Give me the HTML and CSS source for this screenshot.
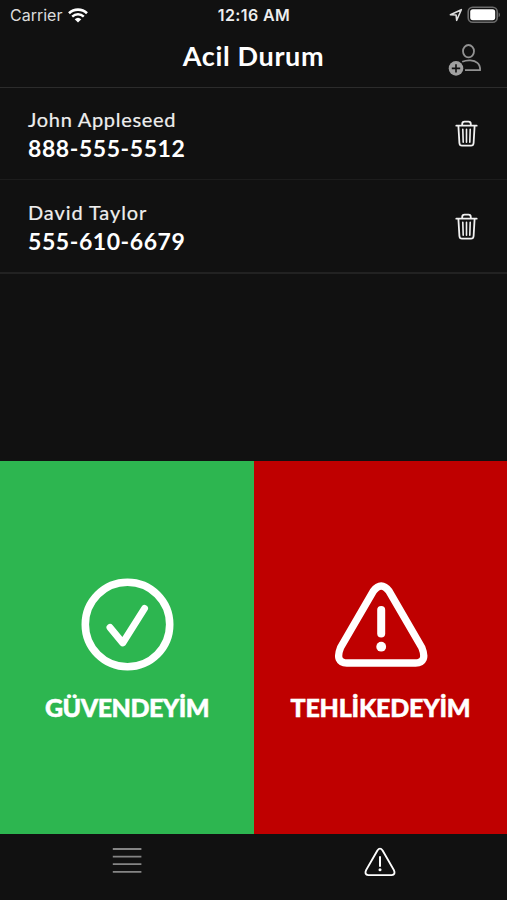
FILE: index.html
```html
<!DOCTYPE html>
<html lang="tr">
<head>
  <meta charset="UTF-8">
  <meta name="viewport" content="width=device-width, initial-scale=1.0">
  <title>Acil Durum</title>
  <link rel="stylesheet" href="styles.css">
</head>
<body>

<div class="app">
  <!-- Status bar -->
  <div class="status-bar">
    <div class="status-left">
      <span class="carrier">Carrier</span>
      <svg class="wifi" width="20" height="15" viewBox="0 0 20 15">
        <path d="M1 5.2a13 13 0 0 1 18 0" fill="none" stroke="#fff" stroke-width="2.6"/>
        <path d="M4.2 8.6a8.3 8.3 0 0 1 11.6 0" fill="none" stroke="#fff" stroke-width="2.4"/>
        <path d="M6.7 11.2a4.8 4.8 0 0 1 6.6 0L10 14.6z" fill="#fff"/>
      </svg>
    </div>
    <span class="clock">12:16 AM</span>
    <div class="status-right">
      <svg width="14" height="14" viewBox="0 0 14 14">
        <path d="M1.4 6.7L12.3 1.7 7.7 12.3 7.1 7z" fill="none" stroke="#ddd" stroke-width="1.6" stroke-linejoin="round"/>
      </svg>
      <svg width="34" height="18" viewBox="0 0 34 18">
        <rect x="1.2" y="1.2" width="29" height="15" rx="4.5" fill="none" stroke="#6c6c6c" stroke-width="1.6"/>
        <rect x="3.2" y="3.2" width="25" height="11" rx="2.6" fill="#fff"/>
        <path d="M31.6 6.4c1.8.7 1.8 4 0 4.7z" fill="#6c6c6c"/>
      </svg>
    </div>
  </div>

  <!-- Header -->
  <div class="header">
    <h1>Acil Durum</h1>
    <button class="add-button" aria-label="Kişi ekle">
      <svg width="34" height="34" viewBox="0 0 34 34">
        <ellipse cx="20.5" cy="8.2" rx="5.5" ry="6.2" fill="none" stroke="#929292" stroke-width="1.8"/>
        <path d="M14.2 18.8c5-2.3 11.8-2 15.2 1.1 2 1.7 2.8 4 2.7 7.2H17" fill="none" stroke="#929292" stroke-width="1.8" stroke-linejoin="round"/>
        <circle cx="8" cy="25.4" r="7.3" fill="#a0a0a0"/>
        <path d="M8 21.2v8.4M3.8 25.4h8.4" stroke="#111" stroke-width="1.6"/>
      </svg>
    </button>
  </div>

  <!-- Contacts -->
  <div class="contacts">
    <div class="contact">
      <div>
        <div class="name name-john">John Appleseed</div>
        <div class="phone">888-555-5512</div>
      </div>
      <button class="delete-button" aria-label="Sil">
        <svg width="23" height="27" viewBox="0 0 23 27">
          <g fill="none" stroke="#f2f2f2" stroke-linecap="round" stroke-linejoin="round">
            <path d="M1.3 5.7h20.4M7.2 5.4V4q0-2.4 2.3-2.4h4Q15.8 1.6 15.8 4v1.4M3.4 6l1 17q.2 2.7 2.6 2.7h9q2.4 0 2.6-2.7l1-17" stroke-width="1.8"/>
            <path d="M7.8 9.2l.4 13M11.5 9.2v13M15.2 9.2l-.4 13" stroke-width="1.6"/>
          </g>
        </svg>
      </button>
    </div>
    <div class="contact">
      <div>
        <div class="name name-david">David Taylor</div>
        <div class="phone">555-610-6679</div>
      </div>
      <button class="delete-button" aria-label="Sil">
        <svg width="23" height="27" viewBox="0 0 23 27">
          <g fill="none" stroke="#f2f2f2" stroke-linecap="round" stroke-linejoin="round">
            <path d="M1.3 5.7h20.4M7.2 5.4V4q0-2.4 2.3-2.4h4Q15.8 1.6 15.8 4v1.4M3.4 6l1 17q.2 2.7 2.6 2.7h9q2.4 0 2.6-2.7l1-17" stroke-width="1.8"/>
            <path d="M7.8 9.2l.4 13M11.5 9.2v13M15.2 9.2l-.4 13" stroke-width="1.6"/>
          </g>
        </svg>
      </button>
    </div>
  </div>

  <!-- Safe / danger buttons -->
  <div class="actions">
    <button class="action safe">
      <svg width="94" height="94" viewBox="0 0 94 94">
        <circle cx="47.5" cy="46.5" r="42.2" fill="none" stroke="#fff" stroke-width="7.6"/>
        <path d="M30 49.5l12.8 15.4L64.5 30.5" fill="none" stroke="#fff" stroke-width="7" stroke-linecap="round" stroke-linejoin="round"/>
      </svg>
      <span class="safe-label">GÜVENDEYİM</span>
    </button>
    <button class="action danger">
      <svg width="94" height="94" viewBox="0 0 94 94">
        <path d="M39.2 13.3q8-10.5 16 0L87.8 69.5q6 15-6.3 15.5H12.9q-12.3-.5-6.3-15.5z" fill="none" stroke="#fff" stroke-width="7.4" stroke-linejoin="round"/>
        <path d="M47.2 32v23.5" stroke="#fff" stroke-width="8" stroke-linecap="round"/>
        <circle cx="47.2" cy="68.7" r="4.9" fill="#fff"/>
      </svg>
      <span class="danger-label">TEHLİKEDEYİM</span>
    </button>
  </div>

  <!-- Tab bar -->
  <div class="tab-bar">
    <div class="tab">
      <svg width="30" height="28" viewBox="0 0 30 28">
        <path d="M.8 2h28.6M.8 9.6h28.6M.8 17.2h28.6M.8 24.8h28.6" stroke="#858585" stroke-width="1.8"/>
      </svg>
    </div>
    <div class="tab">
      <svg width="32" height="30" viewBox="0 0 32 30">
        <path d="M13.4 3.5q2.6-3.8 5.2 0L29.9 23.1q2 4.5-2.2 5H4.3q-4.2-.5-2.2-5z" fill="none" stroke="#fff" stroke-width="1.9" stroke-linejoin="round"/>
        <path d="M16 10v9" stroke="#fff" stroke-width="2" stroke-linecap="round"/>
        <circle cx="16" cy="22.8" r="1.5" fill="#fff"/>
      </svg>
    </div>
  </div>
</div>

</body>
</html>
```
FILE: styles.css
```css
body {
  margin: 0;
  background-color: #111;
  color: #fff;
  font-family: Lato, "Open Sans", sans-serif;
}

button {
  border: none;
  padding: 0;
  background: none;
  color: inherit;
  font-family: inherit;
  cursor: pointer;
}

svg {
  display: block;
}

.app {
  height: 900px;
  display: flex;
  flex-direction: column;
  overflow: hidden;
}

.status-bar {
  height: 30px;
  padding: 0 6px 0 10px;
  box-sizing: border-box;
  display: grid;
  grid-template-columns: 1fr auto 1fr;
  align-items: center;
  font-family: Inter, sans-serif;
  font-size: 16px;
  line-height: 30px;
}

.status-left, .status-right {
  display: flex;
  align-items: center;
}

.status-left {
  gap: 6px;
}

.carrier {
  color: #dcdcdc;
}

.clock {
  padding-right: 3px;
  font-weight: 600;
  color: #eee;
  letter-spacing: 0.4px;
}

.status-right {
  justify-content: flex-end;
  gap: 4px;
  padding-bottom: 1px;
}

.header {
  height: 58px;
  box-sizing: border-box;
  border-bottom: 1px solid #2c2c2c;
  display: grid;
  grid-template-columns: 60px 1fr 60px;
  align-items: center;
}

h1 {
  grid-column: 2;
  margin: 0;
  padding-bottom: 6px;
  text-align: center;
  font-size: 27px;
  line-height: 36px;
  font-weight: 700;
  letter-spacing: 0.65px;
}

.add-button {
  padding: 2px 0 0 1px;
  justify-self: start;
}

.contacts {
  border-bottom: 2px solid #222;
}

.contact {
  height: 91px;
  box-sizing: border-box;
  padding: 0 29px 0 28px;
  display: flex;
  justify-content: space-between;
  align-items: center;
}

.contact + .contact {
  height: 93px;
  padding-top: 1px;
  border-top: 1px solid #1d1d1d;
}

.delete-button {
  padding-bottom: 1px;
}

.name {
  font-size: 20px;
  line-height: 28px;
  font-weight: 400;
  color: #eee;
  -webkit-text-stroke: 0.2px #eee;
}

.name-john {
  letter-spacing: 0.7px;
}

.name-david {
  letter-spacing: 0.9px;
}

.phone {
  font-size: 23px;
  line-height: 30px;
  font-weight: 700;
  letter-spacing: 0.57px;
}

.actions {
  height: 373px;
  margin-top: auto;
  display: flex;
}

.action {
  width: 254px;
  padding-top: 6px;
  display: flex;
  flex-direction: column;
  align-items: center;
  justify-content: center;
  gap: 19px;
  font-size: 25px;
  line-height: 32px;
  font-weight: 900;
  -webkit-text-stroke: 0.5px #fff;
}

.safe {
  background-color: #2db650;
}

.safe-label {
  letter-spacing: -0.5px;
}

.danger {
  width: 253px;
  background-color: #bf0000;
}

.danger-label {
  letter-spacing: -0.2px;
}

.tab-bar {
  height: 66px;
  display: flex;
}

.tab {
  flex: 1;
  padding-top: 13px;
  display: flex;
  justify-content: center;
}
```
